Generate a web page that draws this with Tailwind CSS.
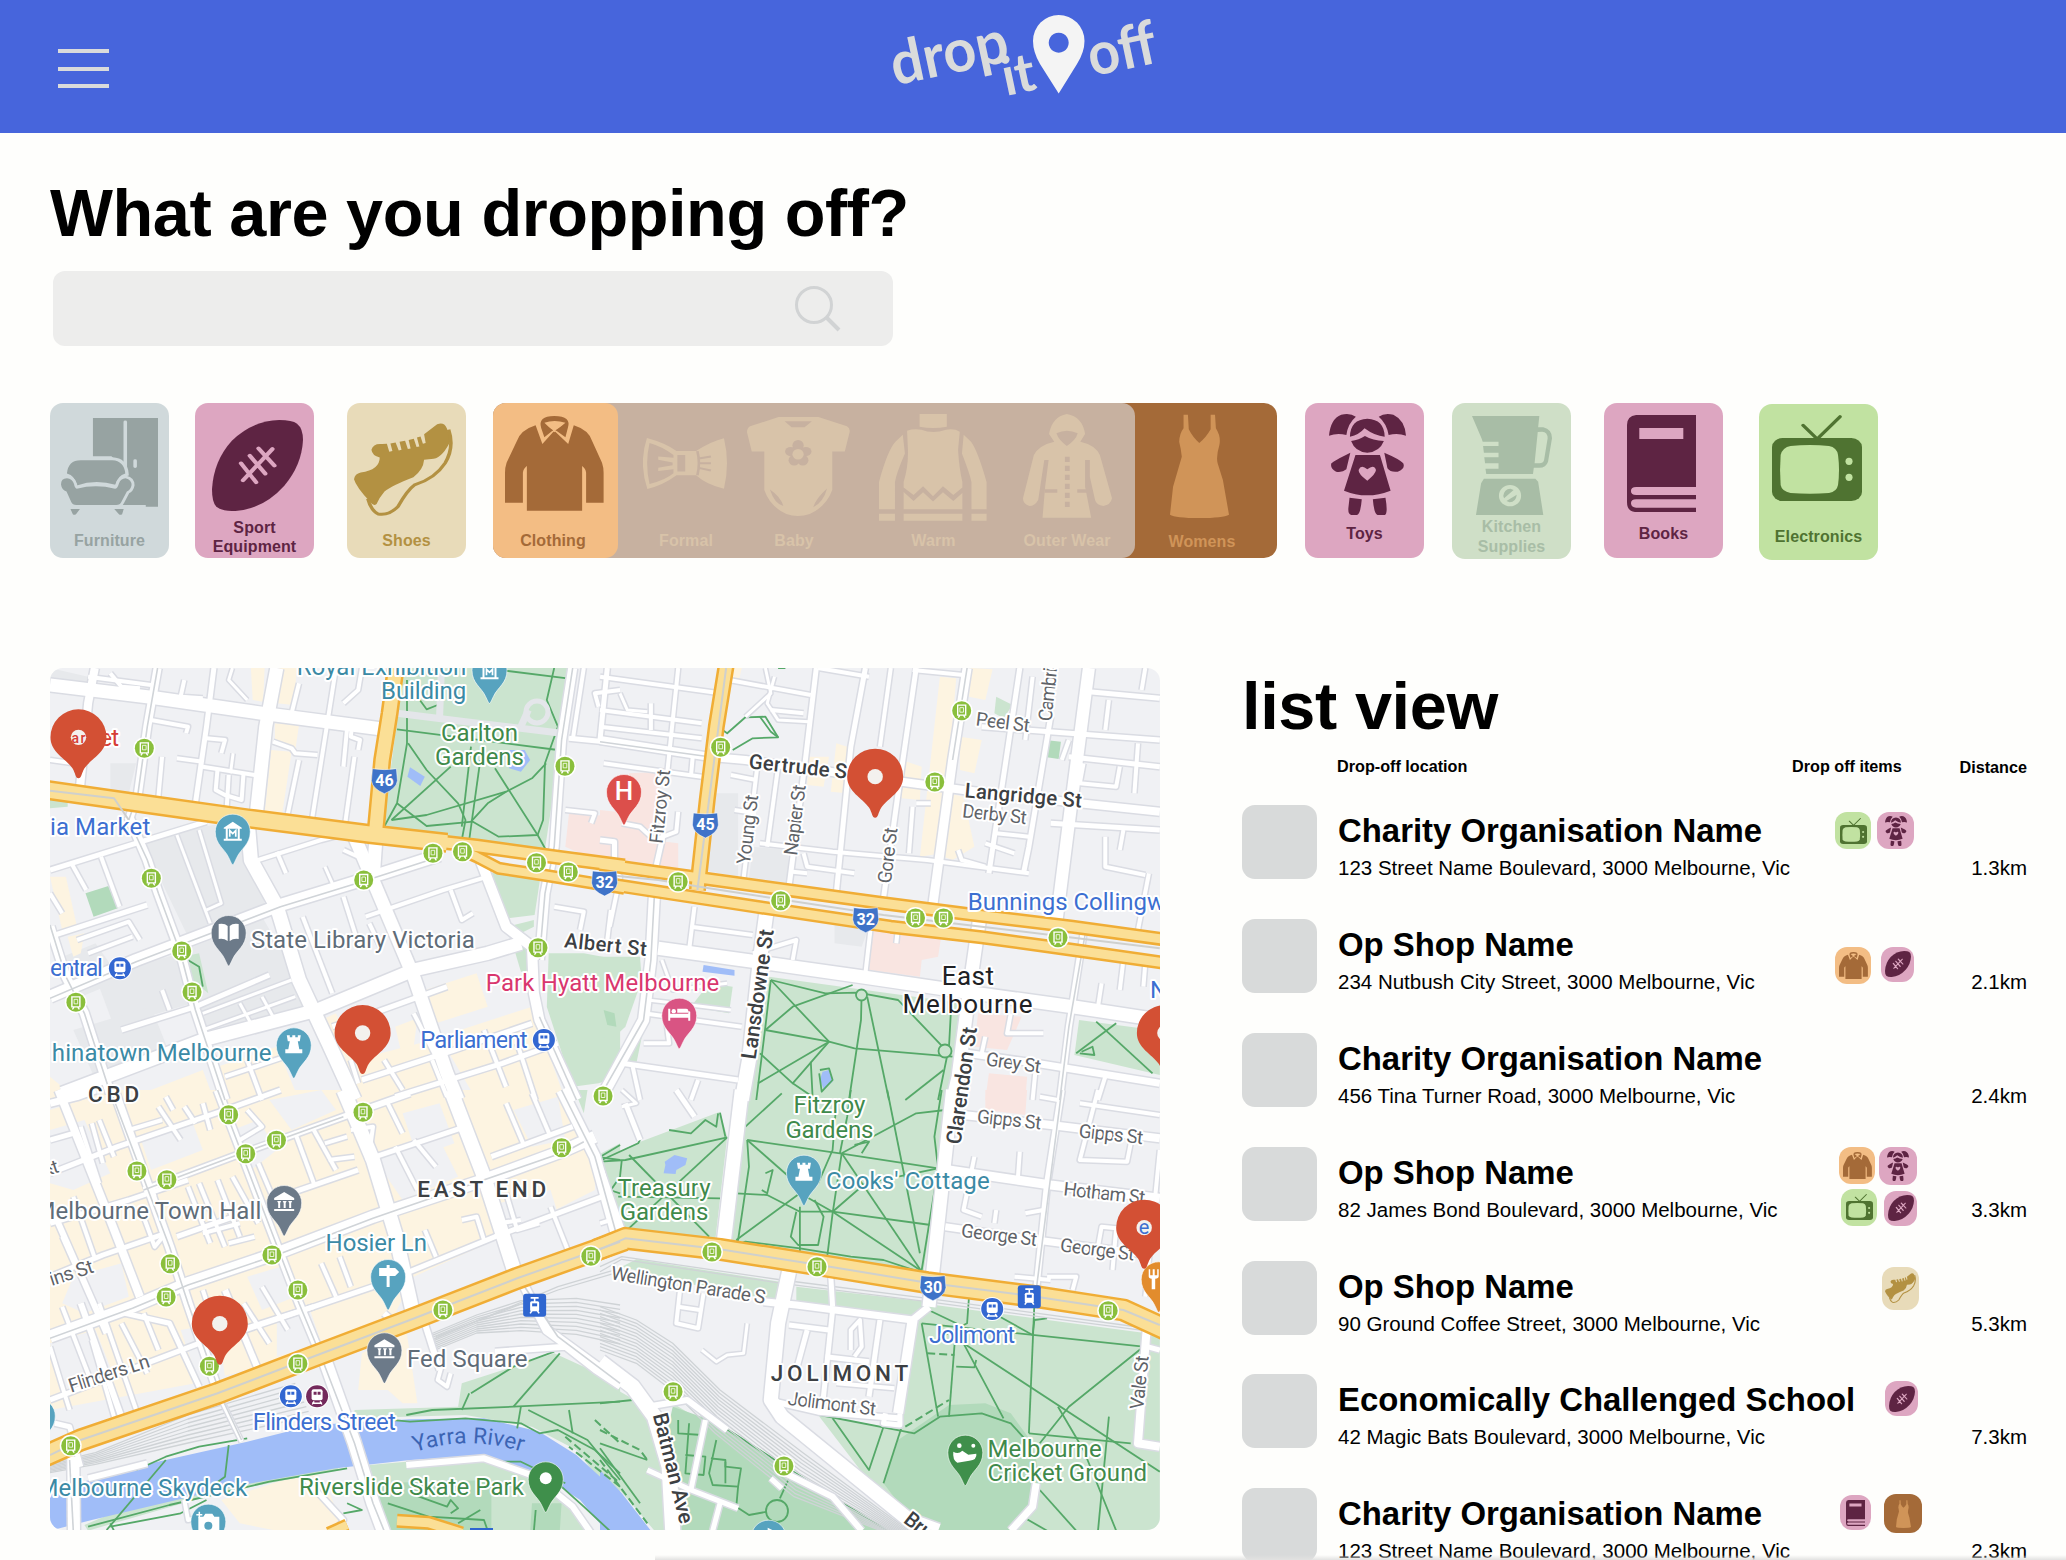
<!DOCTYPE html>
<html lang="en">
<head>
<meta charset="utf-8">
<title>Drop It Off</title>
<script src="https://cdn.jsdelivr.net/npm/@tailwindcss/browser@4"></script>
</head>
<body class="w-[2066px] h-[1560px] overflow-hidden bg-[#fefefc] font-['Liberation_Sans',Arial,sans-serif] text-black">

<!-- Shared icon artwork; colours come from currentColor and --bg -->
<svg class="hidden">
  <symbol id="furniture" viewBox="52 83 246 292" preserveAspectRatio="none">
    <path fill="currentColor" d="M133 83H298V350H267V345H205V230L180 198H133Z"/>
    <path d="M215 95V250M240 212V229" stroke="var(--bg)" stroke-width="9" stroke-linecap="round" fill="none"/>
    <path fill="currentColor" stroke="var(--bg)" stroke-width="17" paint-order="stroke" d="M67 250Q70 210 102 210H182Q212 212 215 250Q196 256 190 284Q140 266 92 286Q88 256 67 250Z"/>
    <path fill="currentColor" stroke="var(--bg)" stroke-width="15" paint-order="stroke" d="M52 283Q52 264 67 264Q81 265 85 282Q87 295 92 296Q140 281 189 296Q195 296 199 280Q203 265 216 264Q231 268 231 285Q229 300 219 304L205 336Q202 345 192 345H91Q81 345 78 336L66 304Q54 300 52 283Z"/>
    <path fill="currentColor" d="M76 357h24l-10 16q-5 3-8 0zM187 357h24l-4 16q-5 3-8 0z"/>
  </symbol>
  <symbol id="ball" viewBox="436 90 229 273" preserveAspectRatio="none">
    <path fill="currentColor" d="M650 101Q665 115 665 150Q662 225 618 287Q565 357 495 363Q462 364 447 350Q436 338 436 298Q440 212 486 152Q538 92 605 90Q638 90 650 101Z"/>
    <path d="M514 271L588 177M509 220L547 277M531 197L570 251M553 175L593 227" stroke="var(--bg)" stroke-width="11" stroke-linecap="round"/>
  </symbol>
  <symbol id="shoe" viewBox="795 100 250 278" preserveAspectRatio="none">
    <path fill="currentColor" d="M972 134L1005 104Q1022 96 1029 115L1040 150Q1020 202 996 207L972 210Q970 240 945 262Q890 287 872 305Q858 325 852 342Q844 350 835 335Q800 290 795 268Q797 252 812 248Q860 240 860 203Q841 198 839 180Q844 160 866 163L878 162L884 186L892 184L887 161L900 158L908 182L915 180L910 156L924 153L931 178L938 176L933 151L946 147L953 172L960 170L954 143L963 140L969 162L976 160Z"/>
    <path fill="none" stroke="currentColor" stroke-width="9" d="M1034 120Q1049 172 1025 220Q1000 266 948 285Q930 300 906 350Q882 378 856 372Q838 362 830 326"/>
  </symbol>
  <symbol id="shirt" viewBox="1177 78 249 285" preserveAspectRatio="none">
    <path fill="currentColor" d="M1254 106Q1216 120 1206 155L1181 218Q1177 232 1177 248V338H1222V248Q1223 236 1232 228V362H1371V228Q1380 236 1381 248V338H1425V248Q1425 232 1421 218L1397 155Q1388 120 1350 106L1336 162L1301 122L1271 162Z"/>
    <path fill="currentColor" d="M1268 114Q1259 78 1301 78Q1345 78 1335 114L1329 142L1301 118L1276 142Z"/>
    <path fill="var(--bg)" d="M1276 98Q1301 88 1329 98L1301 127Z"/>
    <path d="M1297 122L1274 104M1305 122L1328 104" stroke="currentColor" stroke-width="3"/>
  </symbol>
  <symbol id="bow" viewBox="78 145 193 152" preserveAspectRatio="none">
    <path fill="currentColor" fill-rule="evenodd" d="M87 145Q130 160 155 184H200Q235 155 264 146Q278 220 264 296Q225 285 200 256H155Q125 285 88 297Q68 220 87 145ZM93 160Q82 220 93 282Q130 270 148 250V238L113 243V234L146 226V218L113 210V200L148 204V196Q125 172 93 160ZM157 196V245H175V196Z"/>
    <path d="M203 184Q210 220 203 256M206 206L234 200M208 220H234M206 234L234 242" stroke="var(--bg)" stroke-width="6" fill="none"/>
  </symbol>
  <symbol id="romper" viewBox="317 80 238 298" preserveAspectRatio="none">
    <path fill="currentColor" d="M390 80H482L548 108Q556 114 554 126L543 184H514V300Q500 350 462 372Q434 384 408 372Q370 350 357 300V184H328L317 126Q317 114 324 108Z"/>
    <path fill="var(--bg)" d="M404 93H467L450 111H420ZM370 298Q395 320 401 348Q380 340 370 298ZM502 295Q476 325 470 352Q494 335 502 295Z"/>
    <g fill="var(--bg)"><ellipse cx="435" cy="166" rx="13" ry="17"/><ellipse cx="418" cy="184" rx="13" ry="14"/><ellipse cx="453" cy="184" rx="13" ry="14"/><ellipse cx="426" cy="210" rx="13" ry="16"/><ellipse cx="446" cy="210" rx="13" ry="16"/></g>
    <ellipse cx="435" cy="192" rx="13" ry="16" fill="currentColor"/>
  </symbol>
  <symbol id="jumper" viewBox="620 72 250 320" preserveAspectRatio="none">
    <path fill="currentColor" d="M714 72H777V110Q745 118 714 110ZM685 122Q700 115 718 119Q745 132 775 119Q795 115 807 125L803 180Q806 240 813 275V292L792 314L768 288L745 318L722 288L700 314L677 292V275Q688 230 687 180ZM677 305L700 332L722 306L745 334L768 306L792 332L813 308V357H677ZM675 134L680 190Q660 250 657 275V357H620V275Q640 180 658 155ZM816 134L812 190Q830 250 834 275V357H869V275Q848 180 833 155ZM620 370H657V391H620ZM677 370H813V391H677ZM834 370H869V391H834Z"/>
  </symbol>
  <symbol id="coat" viewBox="953 72 205 312" preserveAspectRatio="none">
    <path fill="currentColor" fill-rule="evenodd" d="M1054 72Q1090 80 1096 132L1085 155Q1120 165 1130 195L1158 325Q1155 345 1138 348Q1122 345 1119 330L1107 260V210H1096V290L1110 383H998L1004 290L1012 210H1002L988 330Q980 348 968 348Q953 343 953 325L978 195Q990 165 1025 155L1013 132Q1020 80 1054 72ZM1030 130Q1035 150 1054 168Q1075 150 1079 130Q1054 115 1030 130Z"/>
    <path d="M1055 200V352" stroke="var(--bg)" stroke-width="11" stroke-dasharray="16 11"/>
    <path d="M1003 303H1032M1078 303H1106" stroke="var(--bg)" stroke-width="10"/>
  </symbol>
  <symbol id="dress" viewBox="1293 72 135 312" preserveAspectRatio="none">
    <path fill="currentColor" d="M1324 74H1334L1336 118Q1345 142 1360 159Q1376 142 1386 118V74H1396L1398 115Q1410 140 1406 165Q1398 200 1402 220L1414 270L1428 374Q1415 384 1360 384Q1305 384 1293 374L1300 290L1320 200Q1318 175 1314 155Q1315 130 1324 115Z"/>
  </symbol>
  <symbol id="doll" viewBox="124 72 195 303" preserveAspectRatio="none">
    <path fill="currentColor" d="M192 80Q178 68 155 74Q128 86 124 137Q145 128 168 135Q172 100 192 80ZM250 80Q264 68 287 74Q316 90 319 137Q298 128 275 135Q270 100 250 80ZM177 140Q178 88 221 86Q264 88 265 140Q240 138 214 115Q200 135 177 140ZM180 153Q200 150 215 138Q235 152 263 153Q252 186 221 188Q190 186 180 153ZM191 195H253L280 302Q220 330 162 302ZM178 188L168 238Q158 248 142 245Q126 236 130 220Q136 212 178 188ZM264 188L272 235Q280 248 298 245Q318 236 312 220Q304 208 264 188ZM176 323L207 328Q204 372 195 375H180Q172 373 173 355ZM235 328L267 323Q274 372 265 375H247Q238 372 235 328Z"/>
    <path fill="var(--bg)" d="M221 272Q198 252 199 240Q205 222 221 238Q238 222 243 240Q242 252 221 272Z"/>
  </symbol>
  <symbol id="blender" viewBox="485 78 202 297" preserveAspectRatio="none">
    <path fill="currentColor" fill-rule="evenodd" d="M485 78H655L652 112H665Q687 118 687 145L677 215Q672 233 655 233H641L639 252H521L519 236H552V220H518L516 202H552V188H515L513 168H552V155H512L509 145ZM651 126L643 220H655Q665 220 667 210L676 145Q676 126 662 125ZM515 266H645L652 275L665 375H495L508 280Z"/>
    <ellipse cx="581" cy="317" rx="28" ry="32" fill="var(--bg)"/>
    <path fill="currentColor" d="M564 318Q566 297 582 296L590 300L566 325ZM598 314Q596 336 580 337L572 333Z"/>
  </symbol>
  <symbol id="book" viewBox="877 75 174 290" preserveAspectRatio="none">
    <path fill="currentColor" fill-rule="evenodd" d="M900 75H1051V290H900Q887 290 887 302Q887 314 900 314H1051V327H900Q887 327 887 339Q888 352 900 352H1051V365H897Q877 363 877 335V105Q877 78 900 75ZM908 114V147H1019V114Z"/>
  </symbol>
  <symbol id="tv" viewBox="1243 75 229 258" preserveAspectRatio="none">
    <path d="M1322 106L1358 147L1416 80" stroke="currentColor" stroke-width="9" stroke-linecap="round" fill="none"/>
    <rect x="1243" y="144" width="229" height="189" rx="27" fill="currentColor"/>
    <path fill="var(--bg)" d="M1290 168Q1340 162 1388 168Q1408 172 1411 195Q1416 240 1411 285Q1408 305 1388 309Q1340 313 1290 309Q1268 304 1265 285Q1262 240 1265 195Q1270 172 1290 168Z"/>
    <ellipse cx="1439" cy="214" rx="9" ry="11" fill="var(--bg)"/><ellipse cx="1439" cy="262" rx="9" ry="11" fill="var(--bg)"/>
  </symbol>
</svg>

<header class="flex h-[133px] bg-[#4765dc]">
  <button class="mt-[49px] ml-[58px] flex h-[39px] w-[51px] flex-col justify-between" aria-label="Menu">
    <span class="h-[4px] w-full bg-[#dadbdb]"></span><span class="h-[4px] w-full bg-[#dadbdb]"></span><span class="h-[4px] w-full bg-[#dadbdb]"></span>
  </button>
  <svg class="ml-[771px] h-[110px] w-[300px]" viewBox="880 0 300 110" font-family="Lato" font-weight="700" fill="#dadbdb" font-size="60">
    <text transform="translate(895 85.500) rotate(-12)" textLength="119" lengthAdjust="spacingAndGlyphs">drop</text>
    <text transform="translate(1006 96) rotate(-12)" textLength="33" font-size="54">it</text>
    <text transform="translate(1092 76.500) rotate(-12)" textLength="69" lengthAdjust="spacingAndGlyphs">off</text>
    <path fill="#f4f4f4" fill-rule="evenodd" d="M1058.700 93.500L1040 64Q1033 52 1033 41A25.700 26 0 0 1 1084.500 41Q1084.500 52 1077 64ZM1058.700 32.700a10 10 0 1 0 .01 0Z"/>
  </svg>
</header>

<main>
  <h1 class="mt-[40px] ml-[50px] h-[80px] whitespace-nowrap text-[66.7px] leading-[80px] font-bold tracking-[-0.45px]">What are you dropping off?</h1>
  <div class="mt-[18px] ml-[53px] flex h-[75px] w-[840px] justify-end rounded-[12px] bg-[#ededec] pr-[51px] pt-[13px]">
    <svg class="h-[48px] w-[48px]" fill="none" stroke="#d1d3d4" stroke-width="3"><circle cx="20" cy="21" r="17.500"/><path d="M33 34L45 46" stroke-width="4"/></svg>
  </div>

  <nav class="mt-[57px] ml-[50px] flex h-[157px] items-start text-center text-[16px] leading-5 font-bold tracking-[0.1px]">
    <div class="flex h-[155px] w-[119px] flex-col rounded-[13px] bg-[#d0d9db] pb-[7px] text-[#97a3a2] [--bg:#d0d9db]">
      <svg class="mt-[15px] ml-[11px] h-[97px] w-[97px]"><use href="#furniture"/></svg><span class="mt-auto">Furniture</span></div>
    <div class="ml-[26px] flex h-[155px] w-[119px] flex-col rounded-[13px] bg-[#dda6c1] pb-[2px] leading-[19px] text-[#5e2443] [--bg:#dda6c1]">
      <svg class="mt-[17px] ml-[17px] h-[91px] w-[91px]"><use href="#ball"/></svg><span class="mt-auto">Sport<br>Equipment</span></div>
    <div class="ml-[33px] flex h-[155px] w-[119px] flex-col rounded-[13px] bg-[#e8dbb9] pb-[7px] text-[#b39142] [--bg:#e8dbb9]">
      <svg class="mt-[20px] ml-[7px] h-[93px] w-[99px]"><use href="#shoe"/></svg><span class="mt-auto">Shoes</span></div>

    <div class="ml-[27px] flex h-[155px] w-[784px] rounded-[13px] bg-[#a46a38] text-[#d8c3a9]">
      <div class="flex h-[155px] w-[642px] rounded-[13px] bg-[#c7b1a0] [--bg:#c7b1a0]">
        <div class="flex w-[125px] flex-col rounded-[13px] bg-[#f3bd84] pb-[7px] text-[#a46a38] [--bg:#f3bd84]">
          <svg class="mt-[13px] ml-[12px] h-[95px] w-[99px]"><use href="#shirt"/></svg><span class="mt-auto mr-[5px]">Clothing</span></div>
        <div class="flex w-[136px] flex-col items-center pb-[7px]"><svg class="mt-[35px] mr-[2px] h-[51px] w-[84px] shrink-0"><use href="#bow"/></svg><span class="mt-auto">Formal</span></div>
        <div class="flex w-[80px] flex-col items-center pb-[7px]"><svg class="mt-[14px] ml-[8px] h-[99px] w-[103px] shrink-0"><use href="#romper"/></svg><span class="mt-auto">Baby</span></div>
        <div class="flex w-[199px] flex-col items-center pb-[7px]"><svg class="mt-[11px] mr-[2px] h-[107px] w-[108px] shrink-0"><use href="#jumper"/></svg><span class="mt-auto">Warm</span></div>
        <div class="flex w-[70px] flex-col items-center pb-[7px]"><svg class="mt-[11px] mr-[2px] h-[104px] w-[89px] shrink-0"><use href="#coat"/></svg><span class="mt-auto mr-[2px] whitespace-nowrap">Outer Wear</span></div>
      </div>
      <div class="flex w-[134px] flex-col items-center pb-[6px] text-[#d09458] [--bg:#a46a38]"><svg class="mt-[11px] mr-[6px] h-[104px] w-[59px]"><use href="#dress"/></svg><span class="mt-auto">Womens</span></div>
    </div>

    <div class="ml-[28px] flex h-[155px] w-[119px] flex-col rounded-[13px] bg-[#dda6c1] pb-[14px] text-[#5e2443] [--bg:#dda6c1]">
      <svg class="mt-[11px] ml-[24px] h-[101px] w-[77px]"><use href="#doll"/></svg><span class="mt-auto">Toys</span></div>
    <div class="ml-[28px] flex h-[156px] w-[119px] flex-col rounded-[13px] bg-[#cfdfc7] pb-[3px] leading-[19.5px] text-[#a8bda6] [--bg:#cfdfc7]">
      <svg class="mt-[13px] ml-[20px] h-[99px] w-[80px]"><use href="#blender"/></svg><span class="mt-auto">Kitchen<br>Supplies</span></div>
    <div class="ml-[33px] flex h-[155px] w-[119px] flex-col rounded-[13px] bg-[#dda6c1] pb-[14px] text-[#5e2443] [--bg:#dda6c1]">
      <svg class="mt-[12px] ml-[23px] h-[97px] w-[69px]"><use href="#book"/></svg><span class="mt-auto">Books</span></div>
    <div class="mt-[1px] ml-[36px] flex h-[156px] w-[119px] flex-col rounded-[13px] bg-[#c1e2a1] pb-[13px] text-[#4f7331] [--bg:#c1e2a1]">
      <svg class="mt-[11px] ml-[13px] h-[86px] w-[90px]"><use href="#tv"/></svg><span class="mt-auto">Electronics</span></div>
  </nav>

  <div class="mt-[108px] ml-[50px] flex items-start">
    <svg id="map" class="h-[862px] w-[1110px] rounded-[13px] bg-[#f0f1f4]" viewBox="50 668 1110 862" font-family="Roboto, sans-serif"></svg>

    <section class="ml-[82px] w-[785px]">
      <h2 class="h-[78px] text-[66.7px] leading-[76px] font-bold tracking-[-0.4px]">list view</h2>
      <div class="grid h-[59px] grid-cols-[95px_455px_167px_68px] pt-[10px] text-[16.2px] leading-[20px] font-bold whitespace-nowrap">
        <span></span><span>Drop-off location</span><span>Drop off items</span><span class="pt-px text-right">Distance</span>
      </div>

      <ul class="whitespace-nowrap">
        <li class="grid h-[113.9px] grid-cols-[95px_455px_135px_100px]">
          <div class="h-[74px] w-[75px] rounded-[13px] bg-[#d8dada]"></div>
          <div><h3 class="pt-[4px] pl-px text-[32.9px] leading-[44px] font-bold">Charity Organisation Name</h3><p class="pl-px text-[20.5px] leading-[30px]">123 Street Name Boulevard, 3000 Melbourne, Vic</p></div>
          <div class="flex items-start gap-[6px] pt-[7px] pl-[43px]">
            <span class="grid h-[37px] w-[36px] place-items-center rounded-[12px] bg-[#c1e2a1] text-[#4f7331] [--bg:#c1e2a1]"><svg class="h-[26px] w-[27px]"><use href="#tv"/></svg></span>
            <span class="grid h-[37px] w-[37px] place-items-center rounded-[12px] bg-[#dda6c1] text-[#5e2443] [--bg:#dda6c1]"><svg class="h-[30px] w-[22px]"><use href="#doll"/></svg></span>
          </div>
          <p class="pt-[48px] text-right text-[20.5px] leading-[30px]">1.3km</p>
        </li>
        <li class="grid h-[113.9px] grid-cols-[95px_455px_135px_100px]">
          <div class="h-[74px] w-[75px] rounded-[13px] bg-[#d8dada]"></div>
          <div><h3 class="pt-[4px] pl-px text-[32.9px] leading-[44px] font-bold">Op Shop Name</h3><p class="pl-px text-[20.5px] leading-[30px]">234 Nutbush City Street, 3000 Melbourne, Vic</p></div>
          <div class="flex items-start gap-[10px] pt-[28px] pl-[43px]">
            <span class="grid h-[37px] w-[36px] place-items-center rounded-[12px] bg-[#f3bd84] text-[#a46a38] [--bg:#f3bd84]"><svg class="h-[27px] w-[29px]"><use href="#shirt"/></svg></span>
            <span class="grid h-[35px] w-[33px] place-items-center rounded-[12px] bg-[#dda6c1] text-[#5e2443] [--bg:#dda6c1]"><svg class="h-[26px] w-[26px]"><use href="#ball"/></svg></span>
          </div>
          <p class="pt-[48px] text-right text-[20.5px] leading-[30px]">2.1km</p>
        </li>
        <li class="grid h-[113.9px] grid-cols-[95px_455px_135px_100px]">
          <div class="h-[74px] w-[75px] rounded-[13px] bg-[#d8dada]"></div>
          <div><h3 class="pt-[4px] pl-px text-[32.9px] leading-[44px] font-bold">Charity Organisation Name</h3><p class="pl-px text-[20.5px] leading-[30px]">456 Tina Turner Road, 3000 Melbourne, Vic</p></div>
          <div></div>
          <p class="pt-[48px] text-right text-[20.5px] leading-[30px]">2.4km</p>
        </li>
        <li class="grid h-[113.9px] grid-cols-[95px_455px_135px_100px]">
          <div class="h-[74px] w-[75px] rounded-[13px] bg-[#d8dada]"></div>
          <div><h3 class="pt-[4px] pl-px text-[32.9px] leading-[44px] font-bold">Op Shop Name</h3><p class="pl-px text-[20.5px] leading-[30px]">82 James Bond Boulevard, 3000 Melbourne, Vic</p></div>
          <div class="flex flex-col gap-[4px] pl-[47px]">
            <div class="flex items-start gap-[4px]">
              <span class="grid h-[37px] w-[36px] place-items-center rounded-[12px] bg-[#f3bd84] text-[#a46a38] [--bg:#f3bd84]"><svg class="h-[27px] w-[29px]"><use href="#shirt"/></svg></span>
              <span class="grid h-[38px] w-[38px] place-items-center rounded-[12px] bg-[#dda6c1] text-[#5e2443] [--bg:#dda6c1]"><svg class="h-[30px] w-[22px]"><use href="#doll"/></svg></span>
            </div>
            <div class="flex items-end gap-[7px] pl-[2px]">
              <span class="grid h-[37px] w-[36px] place-items-center rounded-[12px] bg-[#c1e2a1] text-[#4f7331] [--bg:#c1e2a1]"><svg class="h-[26px] w-[27px]"><use href="#tv"/></svg></span>
              <span class="grid h-[35px] w-[33px] place-items-center rounded-[12px] bg-[#dda6c1] text-[#5e2443] [--bg:#dda6c1]"><svg class="h-[26px] w-[26px]"><use href="#ball"/></svg></span>
            </div>
          </div>
          <p class="pt-[48px] text-right text-[20.5px] leading-[30px]">3.3km</p>
        </li>
        <li class="grid h-[113.9px] grid-cols-[95px_455px_135px_100px]">
          <div class="h-[74px] w-[75px] rounded-[13px] bg-[#d8dada]"></div>
          <div><h3 class="pt-[4px] pl-px text-[32.9px] leading-[44px] font-bold">Op Shop Name</h3><p class="pl-px text-[20.5px] leading-[30px]">90 Ground Coffee Street, 3000 Melbourne, Vic</p></div>
          <div class="flex items-start pt-[6px] pl-[90px]">
            <span class="grid h-[43px] w-[37px] place-items-center rounded-[12px] bg-[#e8dbb9] text-[#b39142] [--bg:#e8dbb9]"><svg class="h-[30px] w-[31px]"><use href="#shoe"/></svg></span>
          </div>
          <p class="pt-[48px] text-right text-[20.5px] leading-[30px]">5.3km</p>
        </li>
        <li class="grid h-[113.9px] grid-cols-[95px_455px_135px_100px]">
          <div class="h-[74px] w-[75px] rounded-[13px] bg-[#d8dada]"></div>
          <div><h3 class="pt-[4px] pl-px text-[32.9px] leading-[44px] font-bold">Economically Challenged School</h3><p class="pl-px text-[20.5px] leading-[30px]">42 Magic Bats Boulevard, 3000 Melbourne, Vic</p></div>
          <div class="flex items-start pt-[7px] pl-[93px]">
            <span class="grid h-[35px] w-[33px] place-items-center rounded-[12px] bg-[#dda6c1] text-[#5e2443] [--bg:#dda6c1]"><svg class="h-[26px] w-[26px]"><use href="#ball"/></svg></span>
          </div>
          <p class="pt-[48px] text-right text-[20.5px] leading-[30px]">7.3km</p>
        </li>
        <li class="grid h-[113.9px] grid-cols-[95px_455px_135px_100px]">
          <div class="h-[74px] w-[75px] rounded-[13px] bg-[#d8dada]"></div>
          <div><h3 class="pt-[4px] pl-px text-[32.9px] leading-[44px] font-bold">Charity Organisation Name</h3><p class="pl-px text-[20.5px] leading-[30px]">123 Street Name Boulevard, 3000 Melbourne, Vic</p></div>
          <div class="flex items-start gap-[13px] pt-[6px] pl-[48px]">
            <span class="mt-px grid h-[35px] w-[31px] place-items-center rounded-[12px] bg-[#dda6c1] text-[#5e2443] [--bg:#dda6c1]"><svg class="h-[26px] w-[19px]"><use href="#book"/></svg></span>
            <span class="grid h-[39px] w-[38px] place-items-center rounded-[12px] bg-[#a46a38] text-[#d09458] [--bg:#a46a38]"><svg class="h-[28px] w-[15px]"><use href="#dress"/></svg></span>
          </div>
          <p class="pt-[48px] text-right text-[20.5px] leading-[30px]">2.3km</p>
        </li>
      </ul>
    </section>
  </div>
</main>
<div class="absolute bottom-0 left-[655px] h-[5px] w-[1411px] bg-linear-to-b from-transparent to-[#e2e2e1]"></div>

<script>
// The map is described in four tiles (a b / c d), each with its own local grid.
const TILE = {a:[40,660,2.703],b:[600,660,2.751],c:[40,1090,2.703],d:[600,1090,2.751]};
const pt = (t,x,y) => [TILE[t][0]+x/TILE[t][2], TILE[t][1]+y/3];
const path = (t,s) => 'M'+s.trim().split(/\s+/).map(p=>{const [x,y]=p.split(',').map(Number);return pt(t,x,y).map(n=>n.toFixed(1)).join(' ')}).join('L');
let out='';
const area=(c,l)=>l.forEach(([t,s])=>out+=`<path d="${path(t,s)}Z" fill="${c}"/>`);
const line=(c,w,l,x='')=>l.forEach(([t,s])=>out+=`<path d="${path(t,s)}" fill="none" stroke="${c}" stroke-width="${w}" stroke-linejoin="round" ${x}/>`);

// land use
area('#e7e9ec',[['a','27,24 130,50 130,100 27,90'],['a','190,310 260,310 240,400 190,395'],['a','250,540 540,480 610,740 400,830 300,600'],['a','150,950 380,880 440,1020 200,1100'],['a','400,830 600,770 700,960 760,1040 440,1110'],['a','90,1110 300,1040 350,1180 150,1260'],['b','320,400 380,400 380,650 280,630'],['b','420,560 520,570 515,670 410,655'],['b','645,790 740,800 720,860 645,850'],['a','40,900 150,850 220,960 90,1020']]);
area('#fdf4e1',[['a','570,24 607,24 603,125 575,120'],['a','645,24 695,24 685,135 640,130'],['a','635,190 700,195 690,270 635,250'],['a','625,270 680,275 655,460 607,455'],['a','27,650 70,650 100,800 60,810'],['a','75,830 120,820 110,880 90,890'],['a','1040,990 1180,940 1210,1040 1070,1090'],['a','960,1100 1020,1075 1010,1160 975,1170'],['a','760,1080 800,1060 850,1200 1060,1140 1140,1320 870,1320'],['a','480,1220 640,1160 700,1320 500,1320'],['a','1080,1130 1330,1040 1420,1320 1180,1320'],['a','27,1250 60,1280 70,1320 27,1320'],['a','300,1290 440,1230 470,1320 290,1320'],
 ['c','27,60 200,0 480,0 850,0 1100,0 1400,0 1500,180 1500,300 1250,440 1010,560 960,670 740,770 560,840 420,880 27,960'],
 ['c','870,790 990,720 1020,940 980,940 940,900 860,900'],['c','490,1230 740,1140 780,1200 820,1320 640,1322 540,1300'],
 ['b','935,50 980,55 940,580 880,590'],['b','1020,24 1080,28 1060,120 1015,110'],['b','575,290 630,290 615,380 570,375'],['b','650,250 680,260 680,400 635,395'],['b','830,300 885,320 880,420 830,415'],['b','990,230 1050,240 1030,340 990,330'],['b','960,400 1000,410 1030,560 970,600 945,590'],['b','370,24 390,24 380,70 360,60']]);
area('#f0f1f4',[['c','27,120 120,90 190,250 90,300 27,280'],['c','270,140 410,90 440,180 300,240'],['c','520,120 590,90 640,180 560,250'],['c','90,560 220,520 240,620 120,670 60,640'],['c','620,30 760,0 800,60 680,120'],['c','980,70 1080,40 1120,160 1020,200'],['c','1280,60 1400,20 1420,150 1330,170'],['c','640,690 730,660 760,760 640,800'],['c','1240,340 1380,300 1420,440 1300,500'],['c','380,720 480,700 500,860 430,880'],['c','900,200 1080,150 1130,260 980,330'],['c','560,560 650,530 690,620 600,660'],['c','27,760 150,720 200,860 60,900']]);
area('#f9e5e1',[['a','1430,460 1568,470 1568,600 1480,590 1420,560'],['b','80,340 170,335 140,540 215,550 215,625 0,590 0,450 80,460'],['b','750,800 940,820 930,890 885,900 880,950 740,930'],['b','1040,1060 1160,1070 1120,1170 1030,1160'],['b','1070,1240 1175,1250 1170,1320 1060,1320'],['d','1060,0 1175,0 1170,75 1060,60']]);
area('#cbe4cf',[['a','985,24 1430,24 1415,200 1365,567 928,503 965,180'],['a','1220,638 1352,655 1337,765 1265,775'],['a','1262,800 1335,780 1335,800 1290,825'],['a','1280,860 1330,855 1330,935 1300,935'],['a','1375,880 1470,880 1568,900 1568,1250 1510,1270 1440,1280 1370,1040'],['a','385,890 430,880 455,1000 410,960'],['a','27,410 75,415 75,440 27,445'],
 ['b','0,890 110,890 115,960 70,1100 40,1130 0,1135'],['b','300,970 365,980 355,1060 250,1040'],['b','85,1110 115,1130 100,1210 50,1200'],['b','465,950 1030,1035 965,1320 412,1320'],['b','1318,1080 1540,1112 1540,1245 1305,1185'],['b','1090,110 1135,135 1110,175 1085,160'],
 ['d','412,0 965,0 888,560 355,478'],['d','0,212 100,160 330,65 350,140 315,470 62,425 0,240'],['d','100,508 520,580 500,635 280,590 60,530'],['d','540,590 900,635 860,685 540,635'],
 ['d','885,640 1540,735 1540,1322 870,1322 730,1160 600,975 780,1010 830,990 860,700'],
 ['c','1140,880 1390,790 1568,880 1568,1250 1450,1080 1330,1010 1150,975 850,985 850,960 1130,950'],['c','1500,200 1568,160 1568,380 1530,330'],['d','0,870 80,920 140,980 175,1130 180,1322 150,1322 0,1130'],
 ['c','890,1125 990,1115 1200,1110 1350,1150 1470,1280 1490,1322 940,1322'],['c','450,1150 820,1125 800,1140 480,1210 130,1322 120,1305'],['d','200,940 780,1322 220,1322'],['c','1445,0 1480,0 1470,70']]);
area('#b2dabb',[['a','123,700 185,678 210,745 145,770'],['d','200,950 330,1000 560,1165 790,1322 220,1322 215,1190 180,1050'],['c','900,1180 1220,1170 1220,1322 940,1322'],['c','1330,1240 1410,1240 1405,1322 1325,1322'],['b','1225,240 1268,245 1262,297 1220,290'],['b','10,1050 40,1060 45,1100 20,1095'],['d','860,1020 900,990 960,945 1060,940 1130,970 1190,1060 1210,1160 1190,1250 1140,1322 880,1322 780,1180 820,1050']]);
area('#a0bdf8',[['c','27,1195 180,1160 300,1120 560,1055 740,1005 1000,988 1200,985 1350,1025 1450,1095 1568,1215 1568,1322 1530,1322 1460,1230 1350,1150 1200,1098 1000,1110 800,1135 520,1190 140,1290 27,1322'],['d','0,1140 60,1210 140,1322 0,1322'],['a','1000,322 1040,350 1028,378 993,350'],['a','1270,270 1310,270 1325,300 1300,335 1268,325'],['b','285,915 370,930 370,947 282,935'],['b','612,1235 630,1230 640,1265 615,1287 605,1260'],['d','178,215 205,195 240,205 235,225 210,240 208,252 175,250 180,225']]);

// park paths
const G=[['a','992,60 992,250 965,430 930,500'],['a','1390,24 1370,120 1400,200 1365,310 1360,480 1345,525 1240,530 1170,485 1045,498 965,430'],['a','995,250 1045,330 1130,430 1150,480 1140,540'],['a','950,480 1110,320'],['a','965,208 1400,270'],['a','950,480 1045,465 1260,395 1330,355 1368,310'],['a','1230,325 1345,525 1365,565'],['a','1165,260 1140,500'],['a','1190,300 1160,540'],['a','1165,485 1210,430 1260,395'],['a','1200,24 1425,55'],['a','1020,110 1045,148 1075,135 1085,60'],['a','385,890 430,920 440,980'],
 ['b','470,960 630,1145 700,1165 970,1190'],['b','470,960 620,1000 710,998 820,1020 960,1180'],['b','455,1110 630,1145 435,1270'],['b','455,1110 530,1040 695,975'],['b','720,990 718,1080 685,1320'],['b','735,1010 795,1320'],['b','440,1180 530,1270 630,1145'],['b','945,1230 840,1320'],['b','965,1060 960,1160 930,1320'],['b','490,24 510,24'],['b','365,270 420,235 490,232 455,170 400,172 350,220 330,205'],['b','440,170 470,215 490,232'],['b','1365,1085 1520,1240'],['b','1420,1090 1310,1180'],['b','1325,1175 1355,1160 1360,1185 1320,1180'],['b','470,960 455,1100 430,1320'],['b','605,1230 630,1225 640,1260 610,1295 603,1240'],['b','580,1205 585,1310 530,1270'],
 ['d','405,150 660,190 930,235'],['d','400,110 500,10'],['d','405,150 410,230 380,450 355,475'],['d','405,150 530,270'],['d','550,350 550,500'],['d','790,0 880,490'],['d','665,190 640,370 625,500'],['d','665,190 870,70 950,60'],['d','665,190 885,545'],['d','375,450 550,310 640,365 910,405'],['d','375,310 460,315 550,365 640,365 880,540'],['d','640,365 730,280 930,235'],['d','355,475 400,455 550,475 690,500 780,510 885,548'],['d','940,0 920,140 930,235 885,540'],['d','540,365 525,440 545,465 600,465 615,380 590,330'],['d','455,250 475,240 460,310 445,300'],['d','650,40 640,180 600,280'],['d','690,0 680,80 660,190'],['d','700,165 740,155 720,190'],
 ['d','0,212 105,160 110,150'],['d','0,215 70,210 350,142'],['d','80,195 300,440'],['d','350,142 70,425'],['d','330,68 345,140'],['d','60,210 55,260 30,300'],['d','190,120 250,130 290,90 320,110 325,70'],['d','50,320 330,325'],
 ['d','885,700 930,980'],['d','885,650 980,700 1000,760 1110,985'],['d','980,700 960,980'],['d','1000,760 1540,1145'],['d','1195,640 1180,1030'],['d','885,700 1540,775'],['d','1490,775 1290,950 1210,1060'],['d','1180,1030 1460,1060'],['d','1260,950 1330,1080 1420,1322'],['d','1400,980 1370,1322'],['d','640,985 740,1140 780,1010'],['d','605,975 865,1030 935,980 1050,970 1130,1000 1180,1060'],['d','780,1180 830,1010'],['d','1210,1200 1310,1322'],['d','1170,1285 1230,1322'],['d','1015,620 1010,700 940,740'],['d','980,830 1030,832 1035,810'],['d','1100,680 1190,735 1195,690 1230,685'],
 ['d','310,990 560,1165 790,1322'],['d','215,990 215,1030 280,1035'],['d','245,1000 235,1150 285,1155 290,1100 235,1095'],['d','320,1050 300,1150 310,1185 380,1190 388,1135 345,1130 345,1110 305,1105'],['d','380,1190 375,1250 410,1275 460,1265'],['d','495,1225 520,1165'],['d','345,1115 345,1180'],['d','0,1060 130,1110'],['d','0,940 90,930'],['d','0,1075 110,1240'],
 ['c','1165,910 1280,830 1390,785'],['c','1140,960 1160,910'],['c','1280,950 1405,790'],['c','990,975 1060,960 1280,950 1568,935'],['c','1300,950 1290,1015'],['c','850,980 1000,995 1150,985 1300,1000 1350,1030 1400,1020 1500,1080 1568,1150'],['c','1320,960 1480,1050 1568,1170'],['c','1430,960 1440,1030'],['c','1500,210 1568,165'],['c','1500,200 1568,210'],['c','1540,300 1568,310'],['c','260,1140 340,1100 430,1070 560,1045'],['c','510,1065 500,1160 450,1200'],['c','340,1110 180,1320'],['c','130,1310 350,1245 620,1175 830,1135'],['c','190,1310 380,1270 450,1230'],['c','190,1300 200,1322'],['c','940,1240 1050,1280 1200,1290 1210,1322'],['c','1000,1210 1100,1250 1110,1230 1130,1255 1110,1270'],['c','1340,1260 1335,1322'],['c','820,1270 870,1260 830,1240'],['c','1400,1180 1470,1250 1540,1322'],['c','1230,1115 1300,1115 1420,1180'],['c','1130,1300 1190,1260']];
line('#55a868',1.8,G);
out+='<g fill="#cbe4cf" stroke="#55a868" stroke-width="1.800"><circle cx="861.500" cy="995" r="5.500"/><circle cx="945" cy="1051" r="6.500"/><circle cx="777" cy="1511" r="11" fill="#b2dabb"/></g>';
line('#55a868',2,[['c','1420,1040 1568,1180'],['c','1568,1190 1430,1070'],['d','0,1020 110,1080 130,1110'],['d','0,1110 130,1300'],['d','840,1010 960,930'],['d','900,790 975,795'],['c','1500,990 1568,1060']],'stroke-dasharray="8 4"');
line('#e4e6ea',7,[['a','965,160 1150,185 1410,220'],['a','1085,24 1080,170'],['a','1300,200 1320,150']]);
out+=`<circle cx="537" cy="712" r="11" fill="none" stroke="#e4e6ea" stroke-width="5"/>`;

// rail yard
let rail=[];
for(let i=0;i<14;i++){const k=i*10;rail.push(['d',`0,${650+k} 100,${690+k} 200,${760+k*1.1} ${330-i},${900+k} ${560-i*2},${1090+k} ${850-i*6},1322`]);}
for(let i=0;i<10;i++){rail.push(['c',`${1050+i*2},${735+i*5} 1180,${675+i*6} 1300,${632+i*10} 1450,${625+i*12} 1568,${645+i*13}`]);}
for(let i=0;i<8;i++){rail.push(['c',`27,${1120+i*4} 150,${1088+i*5} 400,${975+i*12} ${690+i*6},${880+i*14}`])}
rail=rail.concat([['d','0,530 60,500 500,570 900,625 1540,720'],['d','0,545 60,508 500,580 900,635 1540,728'],['c','1060,750 1400,590 1568,535'],['c','1070,740 1400,600 1568,545']]);
line('#cfd3d6',1.3,rail);

// streets, drawn as casings first and then surfaces
const R=[
 [13,'a','27,75 300,112 600,160 930,208'],[8,'a','148,24 130,130 105,420'],[8,'a','318,24 290,200 265,400 240,480'],[5,'a','470,24 450,200 420,430'],[13,'a','640,24 610,200 585,460'],[4,'a','800,24 775,200 735,480'],[4,'a','700,300 670,460'],[4,'a','850,290 825,490'],[4,'a','130,50 300,75'],[4,'a','190,40 220,80 270,85'],[4,'a','390,60 380,110 440,115'],[4,'a','300,180 400,200 395,220'],[4,'a','450,235 500,240 490,280'],[4,'a','330,290 320,410'],[4,'a','370,295 440,305'],[4,'a','440,320 580,345'],[4,'a','480,325 475,390 500,405 545,420 550,340'],[4,'a','510,345 505,440'],[3,'a','522,280 515,340'],[4,'a','630,245 680,265 690,280 750,285'],[4,'a','845,180 840,230 865,240 860,270'],[4,'a','795,200 830,205 820,320'],[4,'a','27,300 90,310'],[4,'a','700,70 680,160'],[3,'a','520,24 510,60 560,120'],[4,'a','870,24 860,90 820,130'],
 [5,'a','27,630 230,560 450,485'],[12,'a','27,1010 260,900 450,820 650,735 870,660 1080,585'],[13,'a','60,1300 440,1140 750,1050 1010,930 1210,880 1300,850'],[5,'a','220,1110 420,1040 620,945'],[5,'a','27,830 290,735'],[4,'a','100,840 240,785 270,840'],[4,'a','130,880 250,830'],[4,'a','85,610 125,690'],[4,'a','165,590 215,740'],[4,'a','590,600 760,540 830,520'],[4,'a','640,575 665,640'],[3,'a','770,620 790,670'],[4,'a','880,770 1090,690 1210,650'],[4,'a','890,790 920,860'],[4,'a','1110,690 1140,780 1170,760'],[4,'a','820,570 860,590'],[3,'a','430,510 490,730 450,750'],[3,'a','370,525 460,790'],[3,'a','440,1110 690,1010'],[3,'a','440,1060 680,960'],[3,'a','540,1030 580,1110'],[3,'a','600,1010 640,1090'],[4,'a','330,990 350,1050'],[4,'a','710,770 790,1000'],[4,'a','820,710 860,850'],[4,'a','27,700 60,760'],
 [9,'a','240,470 290,600 320,700 380,880 420,1050 500,1320'],[9,'a','27,800 70,950 120,1060 190,1300'],[14,'a','560,470 570,600 640,740 700,960 780,1150 850,1320'],[13,'a','850,530 930,740 1010,950 1100,1240 1130,1320'],[13,'a','910,500 900,660'],[10,'a','1190,600 1260,800 1330,860 1335,1000 1350,1080 1450,1320'],[9,'a','1440,24 1410,240 1390,560 1365,700 1350,900'],[5,'a','1430,235 1568,250'],[4,'a','1390,740 1470,755 1460,810'],[4,'a','1530,620 1568,650 1540,800'],[4,'a','1470,24 1440,240'],[4,'a','1568,90 1500,100 1510,140'],[4,'a','1420,450 1500,460 1490,490'],
 [5,'a','790,1100 900,1060 1100,980'],[5,'a','870,1260 1120,1170 1330,1090'],[5,'a','960,1310 1250,1210 1400,1150'],[4,'a','930,1200 980,1290'],[4,'a','1010,1060 1070,1190'],[4,'a','1060,1200 1100,1310'],[4,'a','1200,1110 1260,1280'],[4,'a','1290,1150 1340,1320'],[4,'a','560,1200 600,1320'],[4,'a','500,1250 690,1180'],[4,'a','840,1200 860,1270'],
 [9,'b','1010,24 970,300 915,740'],[12,'b','1345,24 1300,400 1255,790'],[5,'b','595,24 565,300 520,680'],[5,'b','730,24 690,260 650,700'],[5,'b','870,24 820,400 780,715'],[4,'b','800,24 770,260'],[5,'b','1155,24 1110,350 1070,640'],[5,'b','1240,170 1180,560 1165,640'],[4,'b','215,24 185,340'],[5,'b','175,520 150,640'],[4,'b','435,300 395,655'],[4,'b','490,320 460,560'],[5,'b','20,24 0,240'],[8,'b','0,240 300,290 400,300 860,370 1000,390 1320,430 1540,455'],[4,'b','440,550 640,575 900,600 1180,640'],[5,'b','1050,200 1540,240'],[5,'b','1345,95 1540,115'],[5,'b','1290,290 1540,320'],[5,'b','1240,490 1540,510'],[4,'b','1090,520 1180,530'],[4,'b','1060,550 1140,580'],[4,'b','0,50 330,100'],[4,'b','0,150 280,190'],[4,'b','0,200 280,235'],[4,'b','140,130 140,210'],[3,'b','55,100 75,150 130,155'],[4,'b','355,60 580,105'],[3,'b','455,24 470,100 400,170'],[3,'b','480,50 460,130 490,180 575,185'],[4,'b','10,310 280,350'],[4,'b','255,290 250,350'],[4,'b','360,345 430,360'],[4,'b','370,450 430,460'],[4,'b','470,150 560,160'],[5,'b','0,540 40,545 40,600'],[4,'b','60,490 110,500 150,540 210,515 215,455'],[4,'b','560,580 570,620 700,640'],[4,'b','530,635 570,640'],[4,'b','600,24 740,50'],[4,'b','860,30 1000,45'],[4,'b','870,430 910,430'],[4,'b','860,440 850,580'],[4,'b','985,570 995,600 1060,620'],[4,'b','1330,310 1320,370 1420,380 1430,320'],[4,'b','1390,530 1390,620 1500,645'],[4,'b','1500,24 1490,90'],[4,'b','1480,250 1470,400'],[4,'b','1510,640 1480,810'],[4,'b','1400,120 1390,210'],[4,'b','1190,50 1170,240'],[4,'b','1290,240 1270,300'],[4,'b','1440,510 1430,570'],
 [13,'b','160,865 430,905 720,950 1000,995 1300,1040 1540,1080'],[14,'b','460,740 440,900 410,1200 390,1320'],[13,'b','1045,770 1020,960 985,1250 970,1320'],[11,'b','150,700 140,900 120,1080 0,1320'],[6,'b','1330,820 1290,1100 1265,1320'],[7,'b','1010,1180 1200,1210 1540,1270'],[4,'b','260,740 245,870'],[4,'b','250,800 420,825'],[4,'b','420,880 540,840 530,900'],[4,'b','745,800 730,940'],[4,'b','820,800 815,850'],[4,'b','1440,900 1430,990'],[4,'b','1500,910 1495,980'],[4,'b','1380,970 1370,1040'],[4,'b','120,1060 390,1100'],[5,'b','60,1210 380,1260'],[4,'b','180,1060 190,1150 120,1150'],[4,'b','90,1220 110,1320'],[4,'b','270,1260 250,1320'],[3,'b','130,1020 210,1030 360,1050'],[3,'b','170,900 200,990 350,970'],[4,'b','1060,1130 1050,1180'],[4,'b','1130,1060 1120,1120 1220,1120'],[4,'b','1390,1250 1370,1320'],[4,'b','1200,1210 1190,1320'],[4,'b','30,750 20,840'],
 [14,'d','390,0 340,460'],[13,'d','970,0 940,300 905,650'],[6,'d','1270,0 1230,280 1200,600'],[8,'d','1000,75 1240,105 1540,145'],[9,'d','960,240 1240,285 1540,325'],[7,'d','950,410 1200,450 1480,490'],[4,'d','1370,0 1320,210 1450,215 1460,160'],[4,'d','1210,20 1260,30'],[4,'d','1320,40 1540,75'],[4,'d','1155,185 1150,260'],[4,'d','1170,370 1220,360'],[4,'d','1030,200 1000,360 1050,380'],[4,'d','1090,360 1085,400'],[4,'d','1370,470 1380,410 1420,415 1410,540'],[4,'d','1300,600 1310,560 1230,560'],[4,'d','1540,180 1500,620'],[4,'d','1140,560 1240,570'],[8,'d','1505,700 1480,1060 1540,1070'],[5,'d','1505,770 1540,780'],
 [14,'d','520,545 490,700 470,930 500,980 850,1290 930,1322'],[7,'d','450,635 540,645 860,690 905,650'],[10,'d','860,690 820,970'],[5,'d','640,660 610,970'],[5,'d','770,690 740,920'],[5,'d','570,720 540,840'],[5,'d','520,705 630,720'],[5,'d','620,800 740,815'],[6,'d','480,935 600,965 820,985'],[4,'d','650,880 810,895'],[4,'d','690,780 690,720 715,690 720,770 700,800'],[5,'d','785,970 780,1000 825,1005 825,970'],[5,'d','635,560 640,650'],[4,'d','220,600 210,700 270,715 285,610'],[4,'d','215,650 275,660'],[3,'d','280,780 320,815 350,795 395,790 405,700'],[15,'d','0,815 90,890 150,980 190,1130 200,1322'],[4,'d','0,230 60,430'],[8,'d','0,240 60,430'],[4,'d','0,400 30,390'],[6,'d','130,950 240,930 350,1020'],[5,'d','290,990 250,1200'],[5,'d','130,1140 250,1200 380,1255'],[5,'d','330,1240 310,1322'],[5,'d','210,0 260,80'],[5,'d','70,40 110,150'],[6,'d','510,1150 640,1220 720,1322'],[5,'d','470,1165 500,1195'],[7,'d','1200,1180 1190,1250 1130,1322'],[3,'d','60,0 100,40 60,50'],
 [12,'c','27,740 250,650 400,580 640,490 900,380 1200,270 1420,180 1500,140'],[7,'c','27,40 100,20 150,0'],[5,'c','27,560 170,495 340,430'],[5,'c','27,400 240,330 400,270'],[5,'c','27,250 210,170 500,60 650,0'],[6,'c','280,300 520,200 820,80 1000,10'],[5,'c','540,725 900,590 1230,440 1520,320'],[5,'c','27,930 430,760 740,650'],[5,'c','650,320 860,240'],[5,'c','370,440 600,350'],[5,'c','880,210 1150,110'],[5,'c','1220,200 1440,110'],[5,'c','940,360 1190,270'],[5,'c','27,150 90,130'],
 [9,'c','200,0 350,470 400,640 480,900'],[6,'c','30,350 180,730'],[6,'c','110,640 220,980'],[8,'c','50,0 190,390 270,620'],[8,'c','480,0 600,350 700,640 760,800'],[14,'c','820,0 900,210 960,430 1010,680'],[14,'c','1110,0 1200,260 1290,570'],[11,'c','1410,0 1500,200 1560,440'],[6,'c','500,600 590,840'],[4,'c','90,320 150,510'],[4,'c','60,650 140,880'],[4,'c','140,750 200,980'],[4,'c','160,640 260,960'],[4,'c','27,770 80,960'],[5,'c','230,670 350,700 430,890'],
 [4,'c','110,110 160,280'],[4,'c','140,100 170,220'],[4,'c','160,90 200,200'],[4,'c','320,50 380,150'],[4,'c','360,60 340,20'],[4,'c','440,40 460,120'],[4,'c','420,100 390,50'],[4,'c','400,290 460,460'],[4,'c','430,280 500,470'],[4,'c','480,270 540,440'],[4,'c','520,260 590,400'],[4,'c','590,220 640,350'],[4,'c','440,430 540,400'],[4,'c','510,460 580,440'],[4,'c','690,130 740,280'],[4,'c','740,120 800,240'],[4,'c','770,160 830,140'],[4,'c','780,210 850,200'],[4,'c','840,120 900,110 890,190'],[4,'c','960,170 1020,300'],[4,'c','1010,150 1070,230'],[4,'c','1140,390 1180,380 1200,450'],[4,'c','1240,400 1300,390'],[4,'c','1380,350 1430,490'],[4,'c','1260,310 1290,420 1350,400'],[4,'c','1040,420 1070,500'],[4,'c','810,500 840,590'],[4,'c','760,520 800,620'],[4,'c','550,640 620,760'],[4,'c','600,590 670,720'],[4,'c','440,600 470,700'],[4,'c','220,700 290,850'],[4,'c','280,670 320,780'],[4,'c','60,440 100,540'],[4,'c','240,120 330,90'],[4,'c','260,210 310,320'],[4,'c','1260,40 1310,170'],[4,'c','1330,10 1380,140'],[4,'c','940,40 980,130'],[4,'c','560,60 600,110 540,150'],[4,'c','340,430 310,470 280,380'],
 [13,'c','770,810 850,1060 900,1240 930,1330'],[12,'c','90,1100 92,1330'],[5,'c','40,1000 80,1010 110,1130'],[4,'c','490,930 545,1055'],[6,'c','130,1165 290,1120'],[6,'c','990,1125 1200,1105 1340,1160 1440,1250 1490,1330'],[9,'c','1310,590 1370,720 1568,880'],[6,'c','1040,700 1080,840'],[6,'c','930,670 960,700'],[4,'c','1085,830 1075,870 1100,890 1110,850'],[6,'c','1230,785 1420,770 1500,840 1568,890'],[5,'c','720,1170 820,1290 800,1322'],[4,'c','390,1230 400,1290 440,1280']
];
R.forEach(([w,t,s])=>line('#dadce3',w+3,[[t,s]]));
R.forEach(([w,t,s])=>line('#ffffff',w,[[t,s]]));
// tram tracks
line('#d0d4d8',1.6,[['a','27,1015 260,905 450,825 650,740 870,665 1080,590'],['a','318,24 290,200 265,400 240,480 290,600 320,700 380,880 420,1050 500,1320'],['a','1440,24 1410,240 1390,560 1365,700 1350,900'],['a','27,795 70,950 120,1060 190,1300'],['a','1350,1070 1450,1320'],['b','1010,24 970,300'],['b','0,245 300,290'],['b','150,700 140,900 120,1080 0,1310'],['b','1335,820 1290,1100 1265,1320'],['c','190,0 350,470 400,640 490,920 545,1050'],['c','480,0 600,350 700,640 760,800 850,1060 900,1240 930,1322'],['c','27,745 250,655 400,585 640,495 900,385 1420,185 1470,155'],['c','280,300 520,200 820,80'],['c','1410,0 1500,200 1560,440'],['d','1270,0 1200,600'],['c','1310,590 1400,740 1568,880'],['c','80,1110 90,1322']]);

// highways
const H=[[13,'a','962,18 945,160 925,300 907,515'],[15,'a','20,390 240,425 560,475 890,522 1100,548'],[10,'a','1080,545 1180,558 1400,592 1580,618'],[8,'a','1120,560 1180,590 1240,625 1360,645 1580,685'],[12,'b','347,18 320,200 295,420 268,690'],[9,'b','0,612 150,635 300,658 780,730 1010,762 1300,800 1550,838'],[9,'b','0,668 160,695 430,740 800,800 1050,832 1250,862 1550,908'],[18,'c','15,1097 110,1050 480,910 750,795 1000,690 1290,565 1580,450'],[18,'d','-10,480 70,445 330,478 620,528 900,578 1200,620 1440,660 1560,720'],[9,'c','965,1292 1050,1298 1140,1330'],[8,'c','780,1330 830,1305']];
H.forEach(([w,t,s])=>line('#f0ad35',w+5,[[t,s]]));
H.forEach(([w,t,s])=>line('#fbdf96',w,[[t,s]]));
line('#cfd0cd',2,[['a','27,392 200,415 240,480'],['b','347,24 268,690'],['b','20,645 160,660 300,685 780,765 1050,800 1540,865'],['c','27,1095 110,1050 480,910 750,795 1000,690 1290,565 1568,455'],['d','0,478 70,445 330,478 620,528 900,578 1200,620 1440,660 1540,705']]);

// tram stops
const stops={a:'282,265 301,655 875,660 1062,580 1142,575 1342,608 1428,636 1419,319 383,873 411,996 97,1027 1346,863',b:'332,262 215,665 497,722 868,774 945,774 1260,833 921,366 995,152',c:'510,74 639,151 556,191 262,243 343,269 352,521 341,621 627,495 697,600 697,821 458,829 83,1067 873,67 1522,18 1410,173 1089,660 1489,499',d:'308,486 597,530 1398,662 201,905 506,1128'};
for(const t in stops)stops[t].split(' ').forEach(s=>{const [x,y]=pt(t,...s.split(',').map(Number));
 out+=`<g transform="translate(${x} ${y})"><circle r="11" fill="#fff"/><circle r="9.500" fill="#8abf3c"/><path d="M-4-5.500H4V4.500H-4ZM-3.500 7L-2 5M3.500 7L2 5" fill="none" stroke="#fff" stroke-width="1.400"/><path d="M-1.800-3H1.800V1.500H-1.800Z" fill="none" stroke="#fff" stroke-width=".8"/></g>`});

// route shields
[['a',931,362,46],['a',1526,669,32],['b',290,495,45],['b',731,779,32],['d',916,593,30]].forEach(([t,x,y,n])=>{[x,y]=pt(t,x,y);
 out+=`<g transform="translate(${x} ${y})"><path d="M-12-12Q0-10 12-12L13 0Q12 8 0 13Q-12 8-13 0Z" fill="#3f73c8" stroke="#fff" stroke-opacity=".5"/><text y="5" text-anchor="middle" font-size="16" font-weight="700" fill="#fff">${n}</text></g>`});

// labels: tile, text, left, right, baseline, size, colour, angle, weight
const TEAL='#3b8aa5',GREEN='#3f8a4b',BLUE='#3c6fd1',GREY='#5f6c78',ST='#5f6368',DK='#3c4043';
[['a','arket',80,214,258,24,'#d63d36'],['a','Royal Exhibition',694,1152,44,24,TEAL],['a','Building',922,1152,118,24,TEAL],['a','Carlton',1084,1292,242,24,GREEN],['a','Gardens',1068,1308,314,24,GREEN],['a','ia Market',27,298,525,24,BLUE],['a','State Library Victoria',570,1175,864,24,GREY],['a','entral',27,170,947,24,BLUE],['a','Park Hyatt Melbourne',1205,1836,992,24,'#d9376e'],['a','Parliament',1028,1318,1164,24,BLUE],['a','hinatown Melbourne',32,626,1204,24,TEAL],['a','CBD',130,268,1325,22.5,DK,0,500],
 ['a','Albert St',1416,1638,862,20.5,DK,6,500],
 ['b','Gertrude S',408,678,325,20.5,DK,6,500],['b','Langridge St',1002,1324,412,20.5,DK,5,500],['b','Derby St',995,1172,472,19,ST,6],['b','Peel St',1032,1180,196,19,ST,7],['b','Grey St',1060,1210,1216,19,ST,8],
 ['b','Bunnings Collingwood',1012,1667,750,24,BLUE],['b','East',940,1084,975,26,'#202124'],['b','Melbourne',832,1190,1060,26,'#202124'],['b','N',1513,1555,1015,24,BLUE],
 ['c','Melbourne Town Hall',-15,598,388,24,GREY],['c','EAST END',1020,1368,320,22.5,DK,0,500],['c','Hosier Ln',772,1046,484,24,TEAL],['c','Fed Square',992,1318,830,24,GREY],['c','Flinders Street',575,962,1020,24,BLUE],['c','Melbourne Skydeck',-7,560,1218,24,TEAL],['c','Riverslide Skate Park',700,1308,1215,24,GREEN],
 ['c','ins St',32,148,588,19.5,ST,-18],['c','Flinders Ln',84,300,908,19.5,ST,-18],['c','st',27,54,255,19,ST,-18],
 ['d','Fitzroy',532,730,70,24,GREEN],['d','Gardens',510,752,143,24,GREEN],['d','Treasury',48,304,318,24,GREEN],['d','Gardens',54,298,390,24,GREEN],["d","Cooks' Cottage",622,1072,297,24,TEAL],['d','Jolimont',905,1142,758,24,BLUE],['d','JOLIMONT',470,848,872,22.5,DK,0,500],['d','Melbourne',1066,1380,1100,24,GREEN],['d','Cricket Ground',1066,1505,1174,24,GREEN],
 ['d','Gipps St',1036,1212,98,19,ST,6],['d','Gipps St',1316,1492,142,19,ST,6],['d','Hotham St',1274,1498,316,19,ST,6],['d','George St',992,1200,440,19,ST,7],['d','George St',1264,1468,484,19,ST,7],['d','Wellington Parade S',28,452,568,19,ST,9],['d','Jolimont St',515,757,944,19,ST,7]
].forEach(([t,s,a,b,y,z,c,r=0,w=400])=>{const [x1,yy]=pt(t,a,y),[x2]=pt(t,b,y);
 out+=`<text transform="translate(${x1} ${yy}) rotate(${r})" textLength="${(x2-x1)/Math.cos(r*Math.PI/180)}" font-size="${z}" font-weight="${w}" fill="${c}" stroke="#fff" stroke-width="4" stroke-linejoin="round" paint-order="stroke">${s}</text>`});
// upright street names: tile, text, foot x, foot y, length, angle, size, weight
[['b','Fitzroy St',172,552,74,-84,19,400],['b','Young St',412,615,70,-83,19,400],['b','Napier St',542,588,71,-83,19,400],['b','Gore St',800,672,56,-83,19,400],['b','Cambridge',1242,185,81,-84,19,400],['b','Lansdowne St',428,1200,131,-82,21,500],['d','Clarendon St',992,165,118,-82,21,500],['d','Vale St',1494,960,54,-84,19,400],['d','Batman Ave',145,975,113,76,21,500],['d','Brunton Ave',832,1295,108,38,21,500]].forEach(([t,s,x,y,l,r,z,w])=>{[x,y]=pt(t,x,y);
 out+=`<text transform="translate(${x} ${y}) rotate(${r})" textLength="${l}" font-size="${z}" font-weight="${w}" fill="${w>400?DK:ST}" stroke="#fff" stroke-width="4" stroke-linejoin="round" paint-order="stroke">${s}</text>`});
out+=`<path id="yarra" d="M415 1452Q470 1434 526 1453" fill="none"/><text font-size="22.500" fill="#3c64b4" textLength="109"><textPath href="#yarra">Yarra River</textPath></text>`;

// place pins
const GL={museum:'<path d="M-9-3L0-9L9-3V-2H7V8H9V10H-9V8H-7V-2H-9ZM-5-2V8H5V-2Z" fill-rule="evenodd"/><path d="M-3 6V0L0 3L3 0V6" fill="none" stroke="#fff" stroke-width="1.700"/>',
 hall:'<path d="M-10-4L0-10L10-4V-2H-10ZM-7-1h4l-1 2v5h-2v-5zM-1.500-1h4l-1 2v5h-2v-5zM4-1h4l-1 2v5h-2v-5zM-10 7H10V9H-10Z"/>',
 tower:'<path d="M-7-9h3v2h2.500v-2h3v2h2.500v-2h3l-1 6h-2l1.500 8h3v4H-8.500v-4h3l1.500-8h-2z"/>',
 book:'<path d="M-10-8Q-4-9-1-6V9Q-5 6-10 7ZM10-8Q4-9 1-6V9Q5 6 10 7Z"/>',H:'<text y="9" text-anchor="middle" font-size="26" font-weight="500">H</text>',
 bed:'<path d="M-11-6h2v5h18V-4l2 1V6h-2V3H-9v3h-2z"/><circle cx="-5.500" cy="-3.500" r="2.200"/><path d="M-2-6H7Q9-6 9-4V-2H-2Z"/>',sign:'<path d="M-9-8H-1.500v-3h3v3H7l4 4-4 4H1.500V11h-3V0H-9z"/>',dot:'<circle r="6"/>',camera:'<path d="M-10-4h5l2-3H4l2 3h5V13H-10Z"/><circle cy="5" r="4" fill="#57a3bf"/><path d="M-9-9v6M-12-6h6" stroke="#fff" stroke-width="1.500"/>',
 flag:'<path d="M-1-9V8H1V-2L7-5Z"/>',bat:'<path d="M-12 0Q-7 3-3-1L3 3L11 2Q12 8 4 9L-8 11Q-13 8-12 0Z"/><circle cx="-6" cy="-6" r="2.300"/><circle cx="8" cy="-6" r="2"/>',fork:'<path transform="translate(-5 0)" d="M-5-9v7q0 2 3 2.500V11h3.500V.5Q5 0 5-2v-7H3.500v6H1v-6H-1v6h-2.500v-6z"/>',none:''};
[['a',1215,28,'#57a3bf','museum'],['a',521,512,'#57a3bf','museum'],['a',510,816,'#6c7a89','book'],['a',686,1153,'#57a3bf','tower'],['b',66,393,'#dc4f4b','H'],['b',218,1064,'#d95483','bed'],['c',660,336,'#6c7a89','hall'],['c',941,558,'#57a3bf','sign'],['c',931,778,'#6c7a89','hall'],['c',1367,1165,'#3f8f4b','dot'],['c',455,1292,'#57a3bf','camera'],['c',-6,975,'#57a3bf','none'],['d',561,245,'#57a3bf','tower'],['d',1005,1085,'#3f8f4b','bat'],['d',464,1340,'#57a3bf','flag'],['d',1537,565,'#e28c2d','fork']].forEach(([t,x,y,c,g])=>{[x,y]=pt(t,x,y);
 out+=`<g transform="translate(${x} ${y})" fill="#fff"><path d="M0 34C-1 34-2 31-4 27C-8 18-17.500 14-17.500 1A17.500 17.500 0 1 1 17.500 1C17.500 14 8 18 4 27C2 31 1 34 0 34Z" fill="${c}" stroke="#fff" stroke-opacity=".6"/>${GL[g]}</g>`});
// stations
[['a',216,925,'#3367d1'],['a',1362,1140,'#3367d1'],['c',678,919,'#3367d1'],['c',749,919,'#742a5c'],['d',1079,657,'#3367d1']].forEach(([t,x,y,c])=>{[x,y]=pt(t,x,y);
 out+=`<g transform="translate(${x} ${y})"><circle r="12" fill="#fff"/><circle r="11" fill="${c}"/><rect x="-5.500" y="-7" width="11" height="11" rx="2" fill="#fff"/><path d="M-3.500-4.500h3v3h-3zM.5-4.500h3v3h-3z" fill="${c}"/><path d="M-5 8L-3 5M5 8L3 5M-5 7H5" stroke="#fff" stroke-width="1.500"/></g>`});
[['c',1337,646],['d',1181,620]].forEach(([t,x,y])=>{[x,y]=pt(t,x,y);
 out+=`<g transform="translate(${x} ${y})"><rect x="-11.500" y="-11.500" width="23" height="23" rx="3" fill="#2f66d0"/><path d="M-4-7.500H4M0-7v4M-4.500 8L-2.500 5M4.500 8L2.500 5" stroke="#fff" stroke-width="1.600"/><rect x="-4.500" y="-4" width="9" height="10" rx="1.500" fill="#fff"/><path d="M-2.500-2h5v3h-5z" fill="#2f66d0"/></g>`});
out+='<rect x="470" y="1528" width="23" height="4" fill="#2f66d0"/>';

// drop-off pins
[['a',104,232],['a',872,1119],['b',757,350],['b',1554,1119],['c',486,701],['d',1497,413]].forEach(([t,x,y],i)=>{[x,y]=pt(t,x,y);
 out+=`<g transform="translate(${x} ${y})"><path d="M0 41C-3 41-3 36-6 31C-13 21-28 15-28 0A28 28 0 1 1 28 0C28 15 13 21 6 31C3 36 3 41 0 41Z" fill="#d35034"/><circle r="7.700" fill="#f3f1ee"/>${i==0?'<text y="6" text-anchor="middle" font-size="14" font-weight="500" fill="#d63d36" textLength="14">ar</text>':i==5?'<text y="6" text-anchor="middle" font-size="20" fill="#3c6fd1">e</text>':''}</g>`});
document.getElementById('map').innerHTML=out;
</script>
</body>
</html>
